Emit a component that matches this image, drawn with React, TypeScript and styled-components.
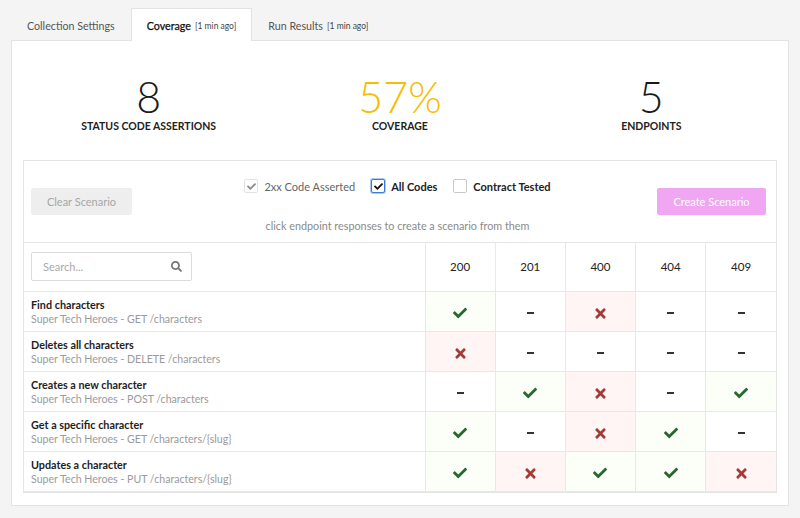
import React from "react";
import styled, { createGlobalStyle } from "styled-components";
import { FaCheck, FaTimes, FaSearch } from "react-icons/fa";

const Global = createGlobalStyle`
  html, body { margin: 0; padding: 0; background: #f4f4f4; }
  body { font-family: Lato, "Open Sans", sans-serif; color: #222; }
  * { box-sizing: border-box; }
`;

const Page = styled.div`
  padding: 8px 11px 13px 11px;
  width: 800px;
`;

const Tabs = styled.div`
  display: flex;
  height: 32px;
`;

const Tab = styled.div<{ $active?: boolean }>`
  display: flex;
  align-items: center;
  gap: 4px;
  padding: 1px 15px 0 15px;
  font-size: 10.7px;
  font-weight: 400;
  color: ${(p) => (p.$active ? "#111" : "#555")};
  -webkit-text-stroke: ${(p) => (p.$active ? "0.25px #111" : "0")};
  background: ${(p) => (p.$active ? "#fff" : "transparent")};
  border: 1px solid ${(p) => (p.$active ? "#e3e3e3" : "transparent")};
  border-bottom: none;
  margin-bottom: -1px;
  position: relative;
  z-index: 1;
`;

const Ago = styled.span`
  font-size: 8.5px;
  font-weight: 400;
  color: #444;
  -webkit-text-stroke: 0;
`;

const Panel = styled.div`
  background: #fff;
  border: 1px solid #e3e3e3;
  padding: 0 11px 12px 11px;
`;

const Stats = styled.div`
  display: grid;
  grid-template-columns: repeat(3, 1fr);
  height: 119px;
  padding-top: 35px;
`;

const Stat = styled.div`
  display: flex;
  flex-direction: column;
  align-items: center;
`;

const StatNum = styled.div<{ $color?: string }>`
  font-size: 43px;
  font-weight: 300;
  line-height: 42px;
  color: ${(p) => p.$color || "#1a1a1a"};
`;

const StatLabel = styled.div`
  font-size: 10.5px;
  line-height: 13px;
  font-weight: 700;
  text-transform: uppercase;
  margin-top: 2px;
  color: #222;
`;

const Box = styled.div`
  border: 1px solid #e4e4e4;
`;

const Toolbar = styled.div`
  display: flex;
  align-items: center;
  justify-content: space-between;
  height: 82px;
  padding: 0 10px 0 7px;
  border-bottom: 1px solid #e4e4e4;
`;

const Button = styled.button<{ $primary?: boolean }>`
  height: 27px;
  border: none;
  border-radius: 2px;
  font-family: Lato, sans-serif;
  font-size: 11px;
  padding: 0;
  width: ${(p) => (p.$primary ? "109px" : "101px")};
  background: ${(p) => (p.$primary ? "#f1a6f3" : "#eeeeee")};
  color: ${(p) => (p.$primary ? "#fff" : "#a6a6a6")};
`;

const Center = styled.div`
  display: flex;
  flex-direction: column;
  align-items: center;
  gap: 26px;
  margin-left: 6px;
  margin-top: 8px;
`;

const Checks = styled.div`
  display: flex;
  gap: 16px;
  align-items: center;
`;

const CheckLabel = styled.label<{ $muted?: boolean }>`
  display: flex;
  align-items: center;
  gap: 6px;
  font-size: 11px;
  font-weight: ${(p) => (p.$muted ? 400 : 700)};
  color: ${(p) => (p.$muted ? "#666" : "#222")};
`;

const CheckBox = styled.span<{ $state: "disabled" | "focused" | "empty" }>`
  width: 14px;
  height: 14px;
  border-radius: 2px;
  display: inline-flex;
  align-items: center;
  justify-content: center;
  background: #fff;
  border: 1px solid
    ${(p) =>
      p.$state === "focused" ? "#3a7bd5" : p.$state === "disabled" ? "#e2e2e2" : "#c8c8c8"};
  box-shadow: ${(p) => (p.$state === "focused" ? "0 0 0 1px #a9c8f2" : "none")};
  color: ${(p) => (p.$state === "disabled" ? "#8a8a8a" : "#111")};
  svg { width: 9px; height: 9px; }
`;

const Hint = styled.div`
  font-size: 10.8px;
  color: #8a8a8a;
`;

const Table = styled.table`
  width: 100%;
  border-collapse: collapse;
  table-layout: fixed;
`;

const HeadCell = styled.th`
  height: 48px;
  font-size: 11.5px;
  font-weight: 400;
  color: #222;
  text-align: center;
  border-left: 1px solid #e8e8e8;
  border-bottom: 1px solid #e8e8e8;
  padding: 0;
`;

const SearchCell = styled.th`
  text-align: left;
  padding: 0 0 0 7px;
  border-bottom: 1px solid #e8e8e8;
  font-weight: 400;
`;

const Search = styled.div`
  width: 161px;
  height: 29px;
  border: 1px solid #dcdcdc;
  border-radius: 2px;
  display: flex;
  align-items: center;
  justify-content: space-between;
  padding: 0 9px 0 11px;
  font-size: 11px;
  color: #aaa;
  svg { width: 11px; height: 11px; color: #777; }
`;

const NameCell = styled.td`
  height: 40px;
  padding: 2px 0 0 7px;
  border-bottom: 1px solid #e8e8e8;
  vertical-align: middle;
`;

const Title = styled.div`
  font-size: 10.8px;
  font-weight: 700;
  color: #1e1e1e;
  line-height: 15px;
`;

const Sub = styled.div`
  font-size: 10.6px;
  color: #9a9a9a;
  line-height: 15px;
`;

type Status = "ok" | "fail" | "none";

const Cell = styled.td<{ $s: Status }>`
  text-align: center;
  vertical-align: middle;
  border-left: 1px solid #e8e8e8;
  border-bottom: 1px solid #e8e8e8;
  padding: 0;
  background: ${(p) => (p.$s === "ok" ? "#fbfff7" : p.$s === "fail" ? "#fff5f4" : "#fff")};
  color: ${(p) => (p.$s === "ok" ? "#26692c" : p.$s === "fail" ? "#a43a36" : "#333")};
  svg { display: inline-block; vertical-align: middle; }
`;

const Dash = styled.span`
  display: inline-block;
  width: 7px;
  height: 2px;
  background: #333;
  vertical-align: middle;
`;

const codes = ["200", "201", "400", "404", "409"];

const rows: { title: string; sub: string; s: Status[] }[] = [
  { title: "Find characters", sub: "Super Tech Heroes - GET /characters", s: ["ok", "none", "fail", "none", "none"] },
  { title: "Deletes all characters", sub: "Super Tech Heroes - DELETE /characters", s: ["fail", "none", "none", "none", "none"] },
  { title: "Creates a new character", sub: "Super Tech Heroes - POST /characters", s: ["none", "ok", "fail", "none", "ok"] },
  { title: "Get a specific character", sub: "Super Tech Heroes - GET /characters/{slug}", s: ["ok", "none", "fail", "ok", "none"] },
  { title: "Updates a character", sub: "Super Tech Heroes - PUT /characters/{slug}", s: ["ok", "fail", "ok", "ok", "fail"] },
];

function Mark({ s }: { s: Status }) {
  if (s === "ok") return <FaCheck size={14} />;
  if (s === "fail") return <FaTimes size={15} />;
  return <Dash />;
}

export default function App() {
  return (
    <>
      <Global />
      <Page>
        <Tabs>
          <Tab>Collection Settings</Tab>
          <Tab $active>
            Coverage <Ago>[1 min ago]</Ago>
          </Tab>
          <Tab>
            Run Results <Ago>[1 min ago]</Ago>
          </Tab>
        </Tabs>
        <Panel>
          <Stats>
            <Stat>
              <StatNum>8</StatNum>
              <StatLabel>Status Code Assertions</StatLabel>
            </Stat>
            <Stat>
              <StatNum $color="#f8bc00">57%</StatNum>
              <StatLabel>Coverage</StatLabel>
            </Stat>
            <Stat>
              <StatNum>5</StatNum>
              <StatLabel>Endpoints</StatLabel>
            </Stat>
          </Stats>
          <Box>
            <Toolbar>
              <Button>Clear Scenario</Button>
              <Center>
                <Checks>
                  <CheckLabel $muted>
                    <CheckBox $state="disabled">
                      <FaCheck />
                    </CheckBox>
                    2xx Code Asserted
                  </CheckLabel>
                  <CheckLabel>
                    <CheckBox $state="focused">
                      <FaCheck />
                    </CheckBox>
                    All Codes
                  </CheckLabel>
                  <CheckLabel>
                    <CheckBox $state="empty" />
                    Contract Tested
                  </CheckLabel>
                </Checks>
                <Hint>click endpoint responses to create a scenario from them</Hint>
              </Center>
              <Button $primary>Create Scenario</Button>
            </Toolbar>
            <Table>
              <colgroup>
                <col style={{ width: 401 }} />
                {codes.map((c) => (
                  <col key={c} />
                ))}
              </colgroup>
              <thead>
                <tr>
                  <SearchCell>
                    <Search>
                      Search...
                      <FaSearch />
                    </Search>
                  </SearchCell>
                  {codes.map((c) => (
                    <HeadCell key={c}>{c}</HeadCell>
                  ))}
                </tr>
              </thead>
              <tbody>
                {rows.map((r) => (
                  <tr key={r.title}>
                    <NameCell>
                      <Title>{r.title}</Title>
                      <Sub>{r.sub}</Sub>
                    </NameCell>
                    {r.s.map((s, i) => (
                      <Cell key={i} $s={s}>
                        <Mark s={s} />
                      </Cell>
                    ))}
                  </tr>
                ))}
              </tbody>
            </Table>
          </Box>
        </Panel>
      </Page>
    </>
  );
}
